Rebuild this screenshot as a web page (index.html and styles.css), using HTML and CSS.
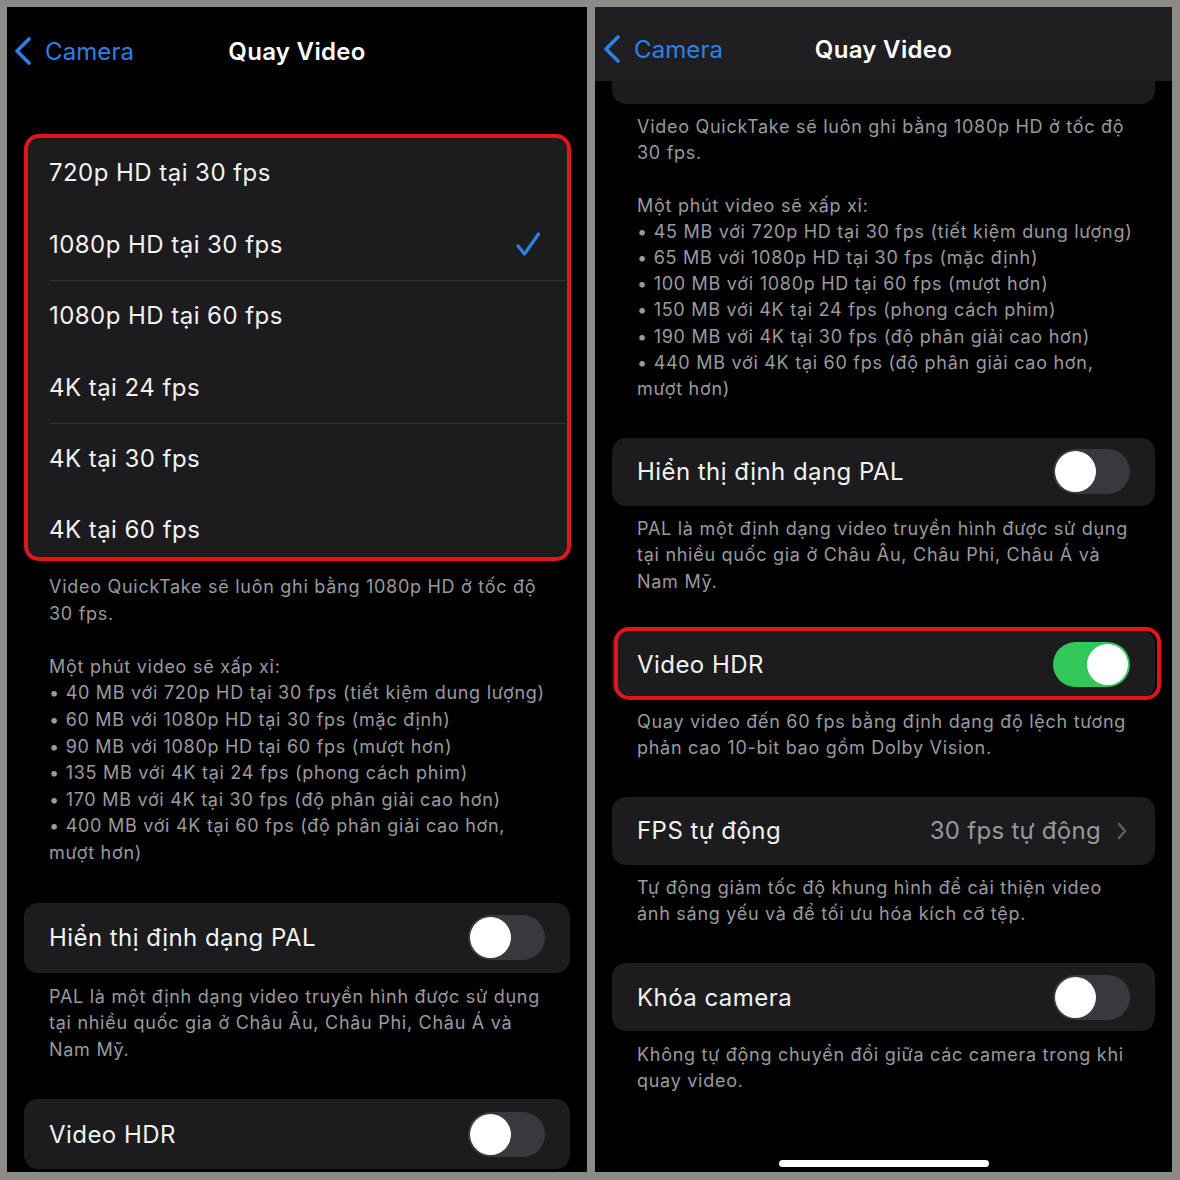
FILE: index.html
```html
<!DOCTYPE html>
<html lang="vi">
<head>
<meta charset="utf-8">
<title>Quay Video</title>
<link rel="stylesheet" href="styles.css">
</head>
<body>
<div class="sheet">
  <section class="phone left">
    <header class="nav">
      <div class="back">
        <svg class="chev" viewBox="0 0 18 28" width="18" height="28"><path d="M15 2 L3 14 L15 26" /></svg>
        <span>Camera</span>
      </div>
      <div class="title">Quay Video</div>
      <div></div>
    </header>

    <div class="group sel">
      <div class="row"><span class="label">720p HD tại 30 fps</span></div>
      <div class="row"><span class="label">1080p HD tại 30 fps</span>
        <svg class="check" viewBox="0 0 26 26" width="26" height="26"><path d="M3 15 L9.5 23 L23.5 3" /></svg>
      </div>
      <div class="row sep"><span class="label">1080p HD tại 60 fps</span></div>
      <div class="row"><span class="label">4K tại 24 fps</span></div>
      <div class="row sep"><span class="label">4K tại 30 fps</span></div>
      <div class="row last"><span class="label">4K tại 60 fps</span></div>
      <div class="redbox"></div>
    </div>
    <p class="foot first">Video QuickTake sẽ luôn ghi bằng 1080p HD ở tốc độ<br>30 fps.<br><br>Một phút video sẽ xấp xỉ:<br>• 40 MB với 720p HD tại 30 fps (tiết kiệm dung lượng)<br>• 60 MB với 1080p HD tại 30 fps (mặc định)<br>• 90 MB với 1080p HD tại 60 fps (mượt hơn)<br>• 135 MB với 4K tại 24 fps (phong cách phim)<br>• 170 MB với 4K tại 30 fps (độ phân giải cao hơn)<br>• 400 MB với 4K tại 60 fps (độ phân giải cao hơn,<br>mượt hơn)</p>

    <div class="group">
      <div class="row"><span class="label">Hiển thị định dạng PAL</span><span class="toggle"><span class="knob"></span></span></div>
    </div>
    <p class="foot">PAL là một định dạng video truyền hình được sử dụng<br>tại nhiều quốc gia ở Châu Âu, Châu Phi, Châu Á và<br>Nam Mỹ.</p>

    <div class="group">
      <div class="row"><span class="label">Video HDR</span><span class="toggle"><span class="knob"></span></span></div>
    </div>
  </section>

  <section class="phone right">
    <header class="nav">
      <div class="back">
        <svg class="chev" viewBox="0 0 18 28" width="18" height="28"><path d="M15 2 L3 14 L15 26" /></svg>
        <span>Camera</span>
      </div>
      <div class="title">Quay Video</div>
      <div></div>
    </header>
    <div class="stub"></div>
    <p class="foot first">Video QuickTake sẽ luôn ghi bằng 1080p HD ở tốc độ<br>30 fps.<br><br>Một phút video sẽ xấp xỉ:<br>• 45 MB với 720p HD tại 30 fps (tiết kiệm dung lượng)<br>• 65 MB với 1080p HD tại 30 fps (mặc định)<br>• 100 MB với 1080p HD tại 60 fps (mượt hơn)<br>• 150 MB với 4K tại 24 fps (phong cách phim)<br>• 190 MB với 4K tại 30 fps (độ phân giải cao hơn)<br>• 440 MB với 4K tại 60 fps (độ phân giải cao hơn,<br>mượt hơn)</p>

    <div class="group">
      <div class="row"><span class="label">Hiển thị định dạng PAL</span><span class="toggle"><span class="knob"></span></span></div>
    </div>
    <p class="foot">PAL là một định dạng video truyền hình được sử dụng<br>tại nhiều quốc gia ở Châu Âu, Châu Phi, Châu Á và<br>Nam Mỹ.</p>

    <div class="group hdr">
      <div class="row"><span class="label">Video HDR</span><span class="toggle on"><span class="knob"></span></span></div>
      <div class="redbox"></div>
    </div>
    <p class="foot">Quay video đến 60 fps bằng định dạng độ lệch tương<br>phản cao 10-bit bao gồm Dolby Vision.</p>

    <div class="group">
      <div class="row"><span class="label">FPS tự động</span>
        <span class="value">30 fps tự động<svg class="more" viewBox="0 0 12 20" width="12" height="20"><path d="M3 3 L9 10 L3 17" /></svg></span>
      </div>
    </div>
    <p class="foot">Tự động giảm tốc độ khung hình để cải thiện video<br>ánh sáng yếu và để tối ưu hóa kích cỡ tệp.</p>

    <div class="group">
      <div class="row"><span class="label">Khóa camera</span><span class="toggle"><span class="knob"></span></span></div>
    </div>
    <p class="foot">Không tự động chuyển đổi giữa các camera trong khi<br>quay video.</p>

    <div class="spacer"></div>
    <div class="home"></div>
  </section>
</div>
</body>
</html>
```

FILE: styles.css
```css
* { box-sizing: border-box; }

html, body {
  margin: 0;
  padding: 0;
  background: #8d8985;
}

.sheet {
  width: 1180px;
  height: 1180px;
  display: flex;
  gap: 8px;
  padding: 7px 8px 8px 7px;
  background: #8d8985;
}

.phone {
  height: 1165px;
  background: #000;
  overflow: hidden;
  display: flex;
  flex-direction: column;
  font-family: Inter, "Noto Sans", "DejaVu Sans", sans-serif;
  color: #f2f2f2;
}

.phone.left { width: 580px; }
.phone.right { width: 577px; }

/* nav */
.nav {
  display: grid;
  grid-template-columns: 1fr auto 1fr;
  align-items: center;
  flex: none;
}

.left .nav { height: 88px; }
.left .back { margin-left: 7px; }
.right .nav {
  height: 74px;
  padding-top: 10px;
  background: #1f1f21;
}
.right .back { margin-left: 8px; }

.back {
  display: flex;
  align-items: center;
  gap: 13px;
  color: #2f7fe6;
  font-size: 24px;
  letter-spacing: 0.1px;
}

.chev path {
  fill: none;
  stroke: #2f7fe6;
  stroke-width: 3.6;
  stroke-linecap: round;
  stroke-linejoin: round;
}

.title {
  font-size: 24px;
  font-weight: 600;
  color: #fff;
  letter-spacing: 0.3px;
}

/* groups */
.group {
  position: relative;
  flex: none;
  margin: 0 17px;
  background: #1c1c1e;
  border-radius: 14px;
}

.left .group.sel { margin-top: 42px; }

.row {
  display: flex;
  align-items: center;
  justify-content: space-between;
  padding: 0 25px;
  font-size: 24px;
  letter-spacing: 0.45px;
}

.left .row { height: 70px; }
.left .sel .row { height: 71.5px; }
.left .sel .row.last { height: 66.5px; padding-top: 4px; }
.right .row { height: 68px; }

.row.sep { box-shadow: inset 0 1px 0 #333336; margin-left: 25px; padding-left: 0; }

.label { white-space: nowrap; }

.check path {
  fill: none;
  stroke: #2f7fe6;
  stroke-width: 3.2;
  stroke-linecap: round;
  stroke-linejoin: round;
}
.check { margin-right: 4px; }

.redbox {
  position: absolute;
  border: 4px solid #e3141c;
  border-radius: 15px;
  pointer-events: none;
}

.sel .redbox { top: -3px; left: 0; right: -1px; bottom: 0; }
.hdr .redbox { top: -3px; left: 2px; right: -6px; bottom: -2px; }

/* toggle */
.toggle {
  position: relative;
  width: 77px;
  height: 45px;
  border-radius: 23px;
  background: #39393d;
  flex: none;
}
.toggle .knob {
  position: absolute;
  top: 2px;
  left: 2px;
  width: 41px;
  height: 41px;
  border-radius: 50%;
  background: #fff;
}
.toggle.on { background: #33c759; }
.toggle.on .knob { left: auto; right: 2px; }

.value {
  display: flex;
  align-items: center;
  gap: 15px;
  color: #98989d;
  letter-spacing: 0.3px;
}
.more path {
  fill: none;
  stroke: #5c5c61;
  stroke-width: 2.6;
  stroke-linecap: round;
  stroke-linejoin: round;
}
.more { margin-right: 2px; }

/* footers */
.foot {
  margin: 0;
  flex: none;
  color: #9a9a9f;
  font-size: 18px;
  letter-spacing: 0.72px;
  white-space: nowrap;
}
.left .foot { padding: 11px 25px 36px 42px; line-height: 26.6px; }
.left .foot.first { padding-top: 13px; }
.right .foot { padding: 10.5px 25px 35.5px 42px; line-height: 26.2px; }
.right .foot.first { padding-top: 10px; }

.stub {
  flex: none;
  height: 23px;
  margin: 0 17px;
  background: #1c1c1e;
  border-radius: 0 0 14px 14px;
}

.spacer { flex: 1; }

.home {
  flex: none;
  align-self: center;
  width: 210px;
  height: 7px;
  margin-bottom: 5px;
  border-radius: 4px;
  background: #fff;
}
```
